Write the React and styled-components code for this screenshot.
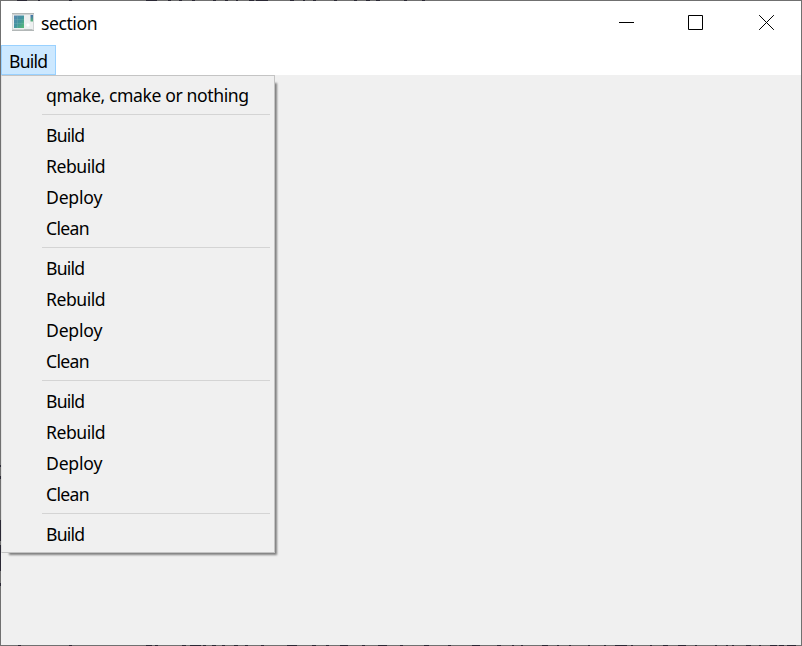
import React from "react";
import styled, { createGlobalStyle } from "styled-components";

const GlobalStyle = createGlobalStyle`
  body { margin: 0; overflow: hidden; }
  * { box-sizing: border-box; }
`;

const edgeMarks = [
  [17, 10], [38, 2], [69, 3], [146, 11], [168, 3], [179, 3], [192, 3], [213, 3],
  [225, 3], [236, 2], [249, 5], [256, 12], [290, 4], [303, 2], [313, 3],
  [334, 3], [354, 3], [366, 4], [376, 4], [404, 3], [422, 3],
];
const bottomMarks = [
  [18, 3], [69, 3], [146, 6], [155, 3], [182, 4], [190, 11], [203, 3], [212, 4], [222, 3],
  [234, 4], [245, 3], [261, 3], [287, 10], [312, 4], [326, 3], [340, 8], [362, 3],
  [378, 9], [400, 3], [424, 5], [448, 3], [472, 8], [497, 4], [512, 2], [521, 2], [542, 6], [557, 2],
  [569, 2], [588, 2], [604, 2], [615, 12], [631, 2], [650, 2], [663, 5], [678, 8],
  [695, 2], [715, 2], [726, 2], [732, 2], [746, 5], [759, 2], [770, 7], [779, 5], [787, 9],
];
const leftMarks = [[465, 2], [476, 3], [520, 21], [545, 26], [583, 3]];
const stripes = (direction, marks) =>
  `linear-gradient(${direction}, #707070 0, ${marks
    .map(([x, w]) => `#707070 ${x}px, #2a2834 ${x}px, #2a2834 ${x + w}px, #707070 ${x + w}px`)
    .join(", ")}, #707070 100%)`;

const Frame = styled.main`
  width: 802px;
  height: 646px;
  display: grid;
  grid-template-rows: 1px 1fr 1px;
  background: ${stripes("to bottom", leftMarks)} 0 0 / 1px 100% no-repeat #707070;
  font-family: "Noto Sans", "Open Sans", sans-serif;
  font-size: 17.6px;
  color: #000;
`;
const Edge = styled.div`
  background: ${(p) => stripes("to right", p.$marks)};
`;
const Client = styled.div`
  margin: 0 1px;
  display: grid;
  grid-template-rows: 44px 30px 1fr;
  background: #f0f0f0;
`;
const TitleBar = styled.header`
  display: flex;
  align-items: center;
  padding: 0 0 1px 10px;
  background: #fff;

  > svg { margin-bottom: 1px; }
`;
const Title = styled.span`
  margin: 1px 0 0 7px;
  line-height: 24px;
  letter-spacing: -0.45px;
`;
const Controls = styled.div`
  display: flex;
  gap: 54px;
  margin: 0 27px 0 auto;
`;
const MenuBar = styled.nav`
  display: flex;
  background: #fff;
`;
const MenuTitle = styled.div`
  width: 55px;
  border: 1px solid #99d1ff;
  background: #cce8ff;
  padding-left: 7px;
  line-height: 31px;
  letter-spacing: -0.8px;
`;
const Workspace = styled.section`
  position: relative;
`;
const MenuPopup = styled.div`
  position: absolute;
  left: 0;
  top: 0;
  width: 274px;
  height: 478px;

  &::before {
    content: "";
    position: absolute;
    inset: 8px 0 0 8px;
    box-shadow: 1px 1px 2px 1px #808080;
  }
`;
const Menu = styled.div`
  position: relative;
  height: 100%;
  padding: 3px 3px 0 2px;
  border: 1px solid #c4c4c4;
  border-left-color: #e2e2e2;
  background: #f0f0f0;
`;
const MenuItem = styled.div`
  height: 31px;
  padding-left: 42px;
  line-height: 32px;
  letter-spacing: ${(p) => p.$tracking}px;
  white-space: nowrap;
`;
const Separator = styled.div`
  height: 1px;
  margin: 4px 1px 4px 38px;
  background: #d4d4d4;
`;

const AppIcon = () => (
  <svg width="23" height="20" viewBox="0 0 23 20">
    <defs>
      <linearGradient id="pane" x1="0" y1="0" x2="1" y2="1">
        <stop offset="0" stopColor="#5a86b0" />
        <stop offset="0.5" stopColor="#4294a0" />
        <stop offset="1" stopColor="#57bd72" />
      </linearGradient>
      <linearGradient id="bar" x1="0" y1="0" x2="0" y2="1">
        <stop offset="0" stopColor="#4170ad" />
        <stop offset="1" stopColor="#58b378" />
      </linearGradient>
    </defs>
    <rect x="1" y="1" width="22" height="18" fill="#d2d5d5" />
    <rect x="2" y="3" width="20" height="14" fill="#edf0f0" />
    <path d="M1 1.5h22M1 18.5h22" stroke="#b2b7b7" />
    <rect x="3" y="3.5" width="10" height="12.5" fill="url(#pane)" />
    <path d="M3 7.5h10M3 11.5h10M6.5 4v12" stroke="#8bc0bd" strokeOpacity=".25" />
    <path d="M15 13l2-2 2 2-2 2z" fill="#fff" />
    <rect x="19.5" y="3" width="2.5" height="6.5" fill="url(#bar)" />
    <path d="M13 17.5h8" stroke="#bbc0c0" />
  </svg>
);

const glyphs = {
  minimize: "M0 7.5h15",
  maximize: "M.5.5h14v14H.5z",
  close: "M.5.5l14 14M14.5.5l-14 14",
};
const Glyph = ({ name }) => (
  <svg width="15" height="15" viewBox="0 0 15 15" fill="none" stroke="#000">
    <path d={glyphs[name]} strokeLinecap={name === "close" ? "square" : "butt"} />
  </svg>
);
const ControlSlot = styled.div`
  display: flex;
  margin-bottom: 1px;
  margin-left: ${(p) => p.$shift || 0}px;
`;

const tracking = { Build: -0.8, Rebuild: -0.48, Deploy: -0.2, Clean: -0.7 };
const groups = [
  ["qmake, cmake or nothing"],
  ["Build", "Rebuild", "Deploy", "Clean"],
  ["Build", "Rebuild", "Deploy", "Clean"],
  ["Build", "Rebuild", "Deploy", "Clean"],
  ["Build"],
];

export default function App() {
  return (
    <>
      <GlobalStyle />
      <Frame>
        <Edge $marks={edgeMarks} />
        <Client>
          <TitleBar>
            <AppIcon />
            <Title>section</Title>
            <Controls>
              <ControlSlot><Glyph name="minimize" /></ControlSlot>
              <ControlSlot><Glyph name="maximize" /></ControlSlot>
              <ControlSlot $shift={2}><Glyph name="close" /></ControlSlot>
            </Controls>
          </TitleBar>
          <MenuBar><MenuTitle>Build</MenuTitle></MenuBar>
          <Workspace>
            <MenuPopup>
              <Menu>
                {groups.map((items, g) => (
                  <React.Fragment key={g}>
                    {g > 0 && <Separator />}
                    {items.map((label) => (
                      <MenuItem key={label} $tracking={tracking[label] ?? -0.4}>{label}</MenuItem>
                    ))}
                  </React.Fragment>
                ))}
              </Menu>
            </MenuPopup>
          </Workspace>
        </Client>
        <Edge $marks={bottomMarks} />
      </Frame>
    </>
  );
}
